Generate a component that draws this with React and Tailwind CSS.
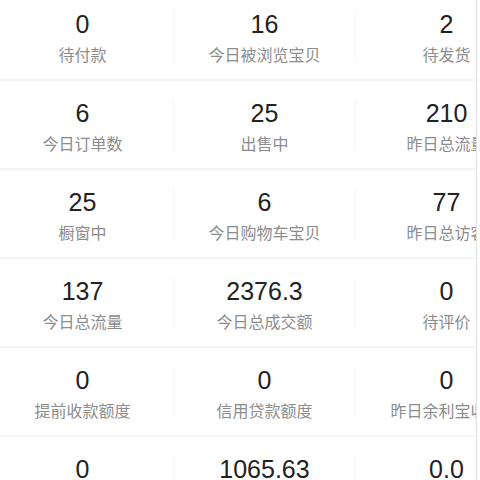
import React from 'react';

const rows = [
	[['0', '待付款'], ['16', '今日被浏览宝贝'], ['2', '待发货']],
	[['6', '今日订单数'], ['25', '出售中'], ['210', '昨日总流量']],
	[['25', '橱窗中'], ['6', '今日购物车宝贝'], ['77', '昨日总访客']],
	[['137', '今日总流量'], ['2376.3', '今日总成交额'], ['0', '待评价']],
	[['0', '提前收款额度'], ['0', '信用贷款额度'], ['0', '昨日余利宝收益']],
	[['0', '可用余额'], ['1065.63', '账户余额'], ['0.0', '昨日收益']],
];

const Stat = ({ value, label }) => (
	<div className="w-[181px] shrink-0 flex flex-col items-center pt-[17px]">
		<div className="text-[25px] leading-[30px] text-[#222222]">{value}</div>
		<div className="mt-[5px] text-[16px] leading-[24px] text-[#8c8c8c] whitespace-nowrap">{label}</div>
	</div>
);

const Divider = () => <div className="w-px h-[52px] self-center shrink-0 bg-[#f6f6f6]" />;

const App = () => {
	return (
		<div className="w-[480px] h-[480px] bg-white flex overflow-hidden" style={{ fontFamily: '"Liberation Sans", "Noto Sans CJK SC", sans-serif' }}>
			<div className="w-[477px] h-full shrink-0 overflow-hidden border-r border-[#e2e2e2]">
				<div className="-mt-2 -ml-2 w-[545px]">
					{rows.map((row, i) => (
						<div key={i} className="h-[89px] flex border-b-2 border-[#f4f4f4]">
							<Stat value={row[0][0]} label={row[0][1]} />
							<Divider />
							<Stat value={row[1][0]} label={row[1][1]} />
							<Divider />
							<Stat value={row[2][0]} label={row[2][1]} />
						</div>
					))}
				</div>
			</div>
		</div>
	);
};

export default App;
